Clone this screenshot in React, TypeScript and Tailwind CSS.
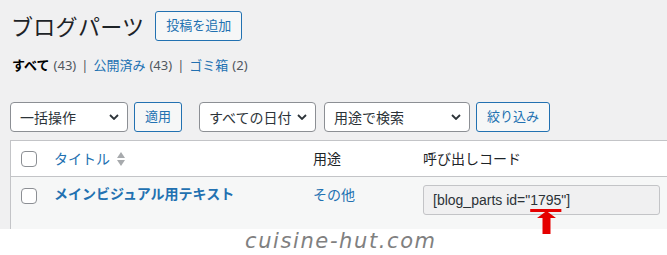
import React from 'react'

const font = "font-['Noto_Sans','Noto_Sans_CJK_JP',sans-serif]"

const Chevron = () => (
  <svg width="10" height="6" viewBox="0 0 10 6" className="shrink-0">
    <path d="M1 1l4 4 4-4" fill="none" stroke="#2c3338" strokeWidth="1.8" />
  </svg>
)

const Select = ({ label, width }: { label: string; width: string }) => (
  <div
    className={`${width} h-[30px] flex items-center justify-between pl-[9px] pr-[8px] bg-white border border-[#8c8f94] rounded-[4px] text-[14px] text-[#2c3338]`}
  >
    <span>{label}</span>
    <Chevron />
  </div>
)

const Button = ({ label, width }: { label: string; width: string }) => (
  <div
    className={`${width} h-[30px] flex items-center justify-center bg-[#f6f7f7] border border-[#2271b1] rounded-[3px] text-[13px] text-[#2271b1]`}
  >
    {label}
  </div>
)

const Checkbox = () => (
  <div className="w-[16px] h-[16px] bg-white border border-[#8c8f94] rounded-[4px]" />
)

const SortIcon = () => (
  <svg width="10" height="16" viewBox="0 0 10 16" className="ml-[6px]">
    <path d="M1 7l4-6 4 6z" fill="#a7aaad" />
    <path d="M1 9l4 6 4-6z" fill="#a7aaad" />
  </svg>
)

export default function App() {
  return (
    <div
      className={`${font} relative w-[667px] h-[255px] overflow-hidden bg-[#f0f0f1] flex flex-col`}
    >
      {/* 見出し */}
      <div className="flex items-center h-[30px] mt-[11px] pl-[11px]">
        <h1 className="text-[22px] leading-none text-[#1d2327] tracking-[0.3px]">
          ブログパーツ
        </h1>
        <div className="ml-[11px]">
          <Button label="投稿を追加" width="w-[87px]" />
        </div>
      </div>

      {/* 絞り込みリンク */}
      <div className="flex items-center h-[20px] mt-[15px] pl-[12px] text-[13px] text-[#50575e]">
        <span className="font-bold text-black">すべて</span>
        <span className="ml-[4px]">(43)</span>
        <span className="mx-[5px]">|</span>
        <span className="text-[#2271b1]">公開済み</span>
        <span className="ml-[4px]">(43)</span>
        <span className="mx-[5px]">|</span>
        <span className="text-[#2271b1]">ゴミ箱</span>
        <span className="ml-[4px]">(2)</span>
      </div>

      {/* 一括操作 */}
      <div className="flex items-center mt-[26px] pl-[10px]">
        <Select label="一括操作" width="w-[118px]" />
        <div className="ml-[6px]">
          <Button label="適用" width="w-[48px]" />
        </div>
        <div className="ml-[17px]">
          <Select label="すべての日付" width="w-[117px]" />
        </div>
        <div className="ml-[8px]">
          <Select label="用途で検索" width="w-[146px]" />
        </div>
        <div className="ml-[6px]">
          <Button label="絞り込み" width="w-[74px]" />
        </div>
      </div>

      {/* 一覧テーブル */}
      <div className="mt-[8px] ml-[10px] w-[680px] border border-b-0 border-[#c3c4c7] bg-white">
        <div className="grid grid-cols-[33px_259px_110px_1fr] h-[36px] items-center border-b border-[#c3c4c7] text-[14px]">
          <div className="pl-[10px] flex">
            <Checkbox />
          </div>
          <div className="pl-[10px] flex items-center text-[#2271b1]">
            タイトル
            <SortIcon />
          </div>
          <div className="pl-[10px] text-[#1d2327]">用途</div>
          <div className="pl-[10px] text-[#1d2327]">呼び出しコード</div>
        </div>
        <div className="grid grid-cols-[33px_259px_110px_1fr] h-[52px] items-start bg-[#f6f7f7] text-[14px]">
          <div className="pl-[10px] pt-[11px] flex">
            <Checkbox />
          </div>
          <div className="pl-[10px] pt-[7px] leading-[20px] font-bold text-[#2271b1]">
            メインビジュアル用テキスト
          </div>
          <div className="pl-[10px] pt-[8px] leading-[20px] text-[#2271b1]">その他</div>
          <div className="pl-[10px] pt-[8px]">
            <div className="w-[237px] h-[30px] flex items-center pl-[9px] bg-[#f0f0f1] border border-[#c3c4c7] rounded-[3px] font-['Liberation_Sans',sans-serif] text-[14px] text-[#2c3338] whitespace-pre">
              {'[blog_parts id="'}
              <span className="underline decoration-[#e50000] decoration-[length:3px] underline-offset-[4px]">
                1795
              </span>
              {'"]'}
            </div>
          </div>
        </div>
      </div>

      {/* ウォーターマーク */}
      <div className="flex-1 bg-white pl-[245px]">
        <span className="block font-['DejaVu_Sans',sans-serif] font-extralight italic text-[21px] leading-[24px] tracking-[1.6px] text-[#808080]">
          cuisine-hut.com
        </span>
      </div>

      {/* 赤矢印 */}
      <svg
        width="21"
        height="24"
        viewBox="0 0 21 24"
        className="absolute left-[536px] top-[211px]"
      >
        <path d="M10.5 0L20 7H14.5V23H6.5V7H1z" fill="#e50000" />
      </svg>
    </div>
  )
}
